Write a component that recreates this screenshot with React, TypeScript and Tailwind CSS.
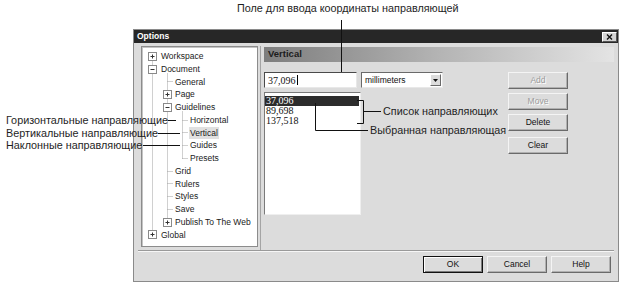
import React from 'react';

const sans = "font-['Liberation_Sans',Arial,sans-serif]";

type TreeNode = { label: string; level: 0 | 1 | 2; box?: '+' | '-'; selected?: boolean };

const tree: TreeNode[] = [
  { label: 'Workspace', level: 0, box: '+' },
  { label: 'Document', level: 0, box: '-' },
  { label: 'General', level: 1 },
  { label: 'Page', level: 1, box: '+' },
  { label: 'Guidelines', level: 1, box: '-' },
  { label: 'Horizontal', level: 2 },
  { label: 'Vertical', level: 2, selected: true },
  { label: 'Guides', level: 2 },
  { label: 'Presets', level: 2 },
  { label: 'Grid', level: 1 },
  { label: 'Rulers', level: 1 },
  { label: 'Styles', level: 1 },
  { label: 'Save', level: 1 },
  { label: 'Publish To The Web', level: 1, box: '+' },
  { label: 'Global', level: 0, box: '+' },
];

const indent = ['pl-[19px]', 'pl-[33px]', 'pl-[48px]'];

const ROW = 12.75;
const TOP = 3;
const cy = (i: number) => Math.floor(TOP + ROW * i + ROW / 2) + 0.5;
const cols = [10.5, 25.5, 40.5];

const TreeLines: React.FC = () => (
  <svg className="absolute inset-0 pointer-events-none" width="115" height="199">
    <g stroke="#a0a0a0" strokeDasharray="1 1" fill="none">
      <line x1={cols[0]} y1={cy(0)} x2={cols[0]} y2={cy(14)} />
      <line x1={cols[1]} y1={cy(1) + 4} x2={cols[1]} y2={cy(13)} />
      <line x1={cols[2]} y1={cy(4) + 4} x2={cols[2]} y2={cy(8)} />
      {tree.map((n, i) =>
        n.box ? null : (
          <line key={i} x1={cols[n.level]} y1={cy(i)} x2={cols[n.level] + 6} y2={cy(i)} />
        )
      )}
    </g>
    {tree.map((n, i) =>
      n.box ? (
        <g key={i}>
          <rect x={cols[n.level] - 4} y={cy(i) - 4} width="8" height="8" fill="#fff" stroke="#8a8a8a" />
          <line x1={cols[n.level] - 2} y1={cy(i)} x2={cols[n.level] + 2} y2={cy(i)} stroke="#333" />
          {n.box === '+' && (
            <line x1={cols[n.level]} y1={cy(i) - 2} x2={cols[n.level]} y2={cy(i) + 2} stroke="#333" />
          )}
        </g>
      ) : null
    )}
  </svg>
);

const Btn: React.FC<{ children: React.ReactNode; disabled?: boolean; primary?: boolean }> = ({
  children,
  disabled,
  primary,
}) => (
  <div
    className={`h-[17px] w-[60px] flex items-center justify-center text-[8.5px] bg-[#dcdcdc] ${
      primary
        ? 'border border-[#111] shadow-[inset_1px_1px_0_#fff,inset_-1px_-1px_0_#7a7a7a]'
        : 'border border-t-[#f4f4f4] border-l-[#f4f4f4] border-b-[#6a6a6a] border-r-[#6a6a6a] shadow-[inset_-1px_-1px_0_#b0b0b0]'
    } ${disabled ? 'text-[#9c9c9c] [text-shadow:1px_1px_0_#fff]' : 'text-[#111]'}`}
  >
    {children}
  </div>
);

export default function App() {
  return (
    <div className={`relative w-[620px] h-[284px] bg-white overflow-hidden pt-[29px] ${sans}`}>
      {/* Dialog */}
      <div className="ml-[133px] w-[486px] h-[253px] border border-[#8a8a8a] bg-[#dcdcdc] flex flex-col">
        {/* Title bar */}
        <div className="h-[13px] bg-[#272727] flex items-center justify-between pl-[3px] pr-[1px]">
          <span className="text-white font-bold text-[8.5px] leading-none">Options</span>
          <div className="w-[15px] h-[10px] bg-[#d4d4d4] border border-t-white border-l-white border-b-[#555] border-r-[#555] flex items-center justify-center">
            <svg width="7" height="6" viewBox="0 0 7 6">
              <path d="M1 0.5 L6 5.5 M6 0.5 L1 5.5" stroke="#111" strokeWidth="1.4" />
            </svg>
          </div>
        </div>

        {/* Content */}
        <div className="mx-[4px] h-[208px] border-b border-[#9a9a9a] flex shadow-[0_1px_0_#f6f6f6]">
          {/* Tree */}
          <div className="relative ml-[3px] mt-[3px] w-[117px] h-[201px] bg-white border border-[#8c8c8c] shadow-[inset_1px_1px_0_#c4c4c4] pt-[3px]">
            <TreeLines />
            {tree.map((n, i) => (
              <div key={i} className={`h-[12.75px] flex items-center text-[8.5px] text-[#1a1a1a] ${indent[n.level]}`}>
                <span className={n.selected ? 'bg-[#e0e0e0] px-[1px] -ml-[1px]' : ''}>{n.label}</span>
              </div>
            ))}
          </div>

          {/* Right panel */}
          <div className="ml-[2px] mt-[3px] flex-1 border-l border-[#a4a4a4] pl-[3px] flex flex-col">
            <div className="mt-[1px] h-[15px] bg-linear-to-r from-[#7e7e7e] via-[#b4b4b4] to-[#e4e4e4] flex items-center pl-[4px]">
              <span className="font-bold text-[9.5px] text-[#1c1c1c]">Vertical</span>
            </div>

            <div className="mt-[10px] flex">
              <div className="w-[179px] flex flex-col">
                <div className="flex gap-[4px]">
                  <div className="w-[93px] h-[16px] bg-white border border-t-[#4a4a4a] border-l-[#4a4a4a] border-b-[#e8e8e8] border-r-[#e8e8e8] flex items-center pl-[3px] font-['Liberation_Serif',serif] text-[10px] text-[#111]">
                    37,096
                    <span className="w-px h-[10px] bg-black ml-[1px]" />
                  </div>
                  <div className="w-[82px] h-[16px] bg-white border border-t-[#6a6a6a] border-l-[#6a6a6a] border-b-[#e8e8e8] border-r-[#e8e8e8] flex items-center justify-between pl-[3px] pr-[1px]">
                    <span className="text-[8.5px] text-[#111]">millimeters</span>
                    <div className="w-[11px] h-[12px] bg-[#dcdcdc] border border-t-white border-l-white border-b-[#6a6a6a] border-r-[#6a6a6a] flex items-center justify-center">
                      <svg width="5" height="3" viewBox="0 0 5 3">
                        <path d="M0 0 H5 L2.5 3 Z" fill="#111" />
                      </svg>
                    </div>
                  </div>
                </div>

                <div className="mt-[4px] w-[97px] h-[123px] bg-white border border-t-[#7a7a7a] border-l-[#7a7a7a] border-b-[#efefef] border-r-[#efefef] pt-[3px] font-['Liberation_Serif',serif] text-[10px]">
                  <div className="h-[10px] leading-[10px] bg-[#2c2c2c] text-white pl-[1px] mr-[1px]">37,096</div>
                  <div className="h-[10px] leading-[10px] text-[#111] pl-[1px]">89,698</div>
                  <div className="h-[10px] leading-[10px] text-[#111] pl-[1px]">137,518</div>
                </div>
              </div>

              <div className="ml-[65px] flex flex-col gap-[4px]">
                <Btn disabled>Add</Btn>
                <Btn disabled>Move</Btn>
                <Btn>Delete</Btn>
                <div className="mt-[2px]">
                  <Btn>Clear</Btn>
                </div>
              </div>
            </div>
          </div>
        </div>

        {/* Bottom buttons */}
        <div className="flex justify-end gap-[4px] pr-[7px] pt-[5px]">
          <Btn primary>OK</Btn>
          <Btn>Cancel</Btn>
          <Btn>Help</Btn>
        </div>
      </div>

      {/* Callout labels */}
      <div className="absolute left-[237px] top-[1px] text-[10.8px] leading-[14px] text-[#1e1e1e]">
        Поле для ввода координаты направляющей
      </div>
      <div className="absolute left-[6px] top-[113px] text-[10.8px] leading-[14px] text-[#1e1e1e]">
        Горизонтальные направляющие
      </div>
      <div className="absolute left-[6px] top-[126px] text-[10.8px] leading-[14px] text-[#1e1e1e]">
        Вертикальные направляющие
      </div>
      <div className="absolute left-[6px] top-[138px] text-[10.8px] leading-[14px] text-[#1e1e1e]">
        Наклонные направляющие
      </div>
      <div className="absolute left-[383px] top-[104px] text-[10.8px] leading-[14px] text-[#1e1e1e]">
        Список направляющих
      </div>
      <div className="absolute left-[370px] top-[123px] text-[10.8px] leading-[14px] text-[#1e1e1e]">
        Выбранная направляющая
      </div>

      {/* Callout lines */}
      <svg className="absolute inset-0 pointer-events-none" width="620" height="284">
        <g stroke="#111" strokeWidth="1" fill="none">
          <line x1="341.5" y1="20" x2="341.5" y2="72" />
          <line x1="168" y1="120.5" x2="176" y2="120.5" />
          <line x1="158" y1="133.5" x2="180" y2="133.5" />
          <line x1="143" y1="145.5" x2="180" y2="145.5" />
          <path d="M357 100.5 H363.5 V123.5 H357" />
          <line x1="363.5" y1="111.5" x2="381" y2="111.5" />
          <path d="M315.5 103 V130.5 H368" />
        </g>
      </svg>
    </div>
  );
}
